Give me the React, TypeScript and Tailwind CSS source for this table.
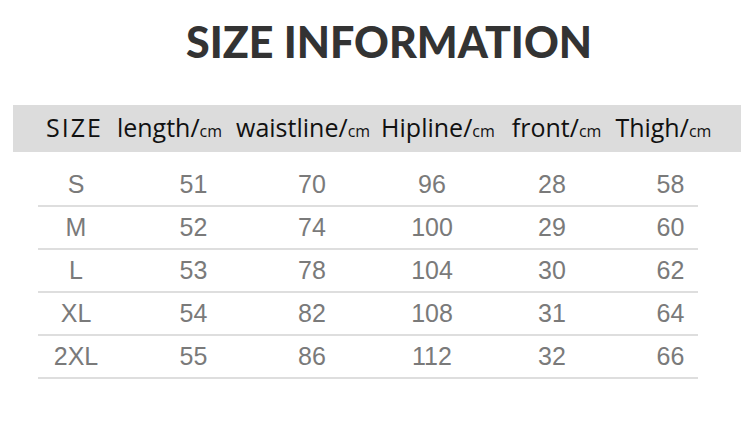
const rows = [
  ["S", "51", "70", "96", "28", "58"],
  ["M", "52", "74", "100", "29", "60"],
  ["L", "53", "78", "104", "30", "62"],
  ["XL", "54", "82", "108", "31", "64"],
  ["2XL", "55", "86", "112", "32", "66"],
];

const headers = [
  { label: "length", ml: "ml-[14px]" },
  { label: "waistline", ml: "ml-[14px]" },
  { label: "Hipline", ml: "ml-[11px]" },
  { label: "front", ml: "ml-[17px]" },
  { label: "Thigh", ml: "ml-[14px]" },
];

const App = () => {
  return (
    <div className="w-[750px] h-[427px] bg-white overflow-hidden">
      <div className="pt-[19px] pl-[28px] h-[105px] text-center">
        <h1 className="font-['Lato',sans-serif] font-black text-[43px] leading-[46px] text-[#333]">
          SIZE INFORMATION
        </h1>
      </div>
      <div className="ml-[13px] w-[728px] h-[47px] bg-[#dcdcdc] flex items-center pl-[33px] pb-[1px] font-['Open_Sans',sans-serif] text-[#111]">
        <span className="text-[25px] tracking-[2px]">SIZE</span>
        {headers.map((h) => (
          <span key={h.label} className={`${h.ml} text-[25px] whitespace-nowrap`}>
            {h.label}/<span className="text-[16px]">cm</span>
          </span>
        ))}
      </div>
      <div className="mt-[12px] ml-[38px] w-[660px] font-['Liberation_Sans',Arial,sans-serif] text-[#7a7a7a] text-[25px]">
        {rows.map((r) => (
          <div key={r[0]} className="border-b-2 border-[#dedede]">
            <div className="-ml-[21px] w-[712px] h-[41px] grid grid-cols-[118px_117px_120px_120px_120px_117px] items-center text-center">
              {r.map((c, i) => (
                <span key={i}>{c}</span>
              ))}
            </div>
          </div>
        ))}
      </div>
    </div>
  );
};

export default App;
